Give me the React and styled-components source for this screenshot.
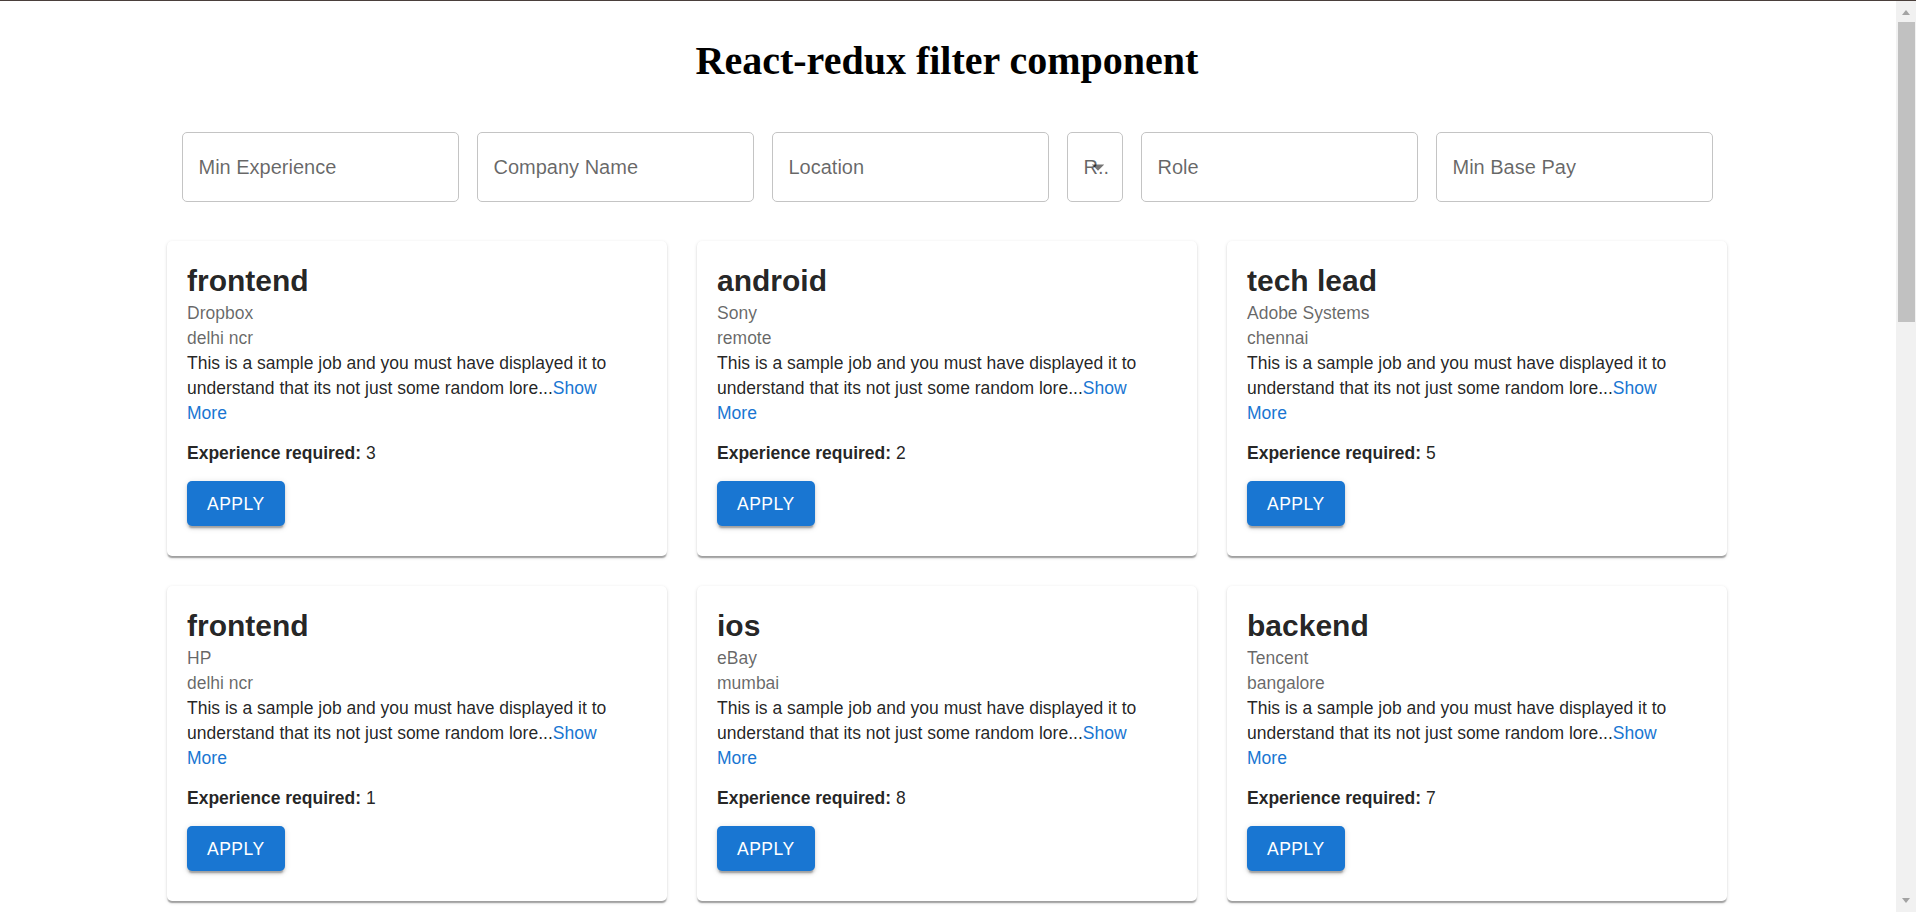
import React, { useState } from 'react';
import styled, { createGlobalStyle } from 'styled-components';

const textColor = 'rgba(0, 0, 0, 0.87)';
const mutedColor = 'rgba(0, 0, 0, 0.6)';
const primary = '#1976d2';

const GlobalStyle = createGlobalStyle`
  html, body {
    margin: 0;
    padding: 0;
    background: #fff;
  }
  body {
    font-family: "Liberation Sans", Arial, Helvetica, sans-serif;
    color: ${textColor};
  }
`;

const Wrapper = styled.div`
  border-top: 1px solid #4a3f3b;
  padding: 37px 22px 30px 0;
`;

// window scrollbar as it shows in the screenshot
const ScrollRail = styled.div`
  position: fixed;
  top: 1px;
  right: 0;
  bottom: 0;
  width: 20px;
  background: #f1f1f1;
`;

const ScrollArrow = styled.div`
  position: absolute;
  left: 6px;
  ${({ down }) => (down ? 'bottom: 9px;' : 'top: 9px;')}
  width: 0;
  height: 0;
  border-left: 4.5px solid transparent;
  border-right: 4.5px solid transparent;
  ${({ down }) => (down ? 'border-top' : 'border-bottom')}: 5px solid #a3a3a3;
`;

const ScrollThumb = styled.div`
  position: absolute;
  top: 21px;
  left: 2px;
  right: 1px;
  height: 300px;
  background: #c1c1c1;
`;

const Title = styled.h1`
  margin: 0 0 48px;
  text-align: center;
  font-family: "Liberation Serif", "Times New Roman", serif;
  font-weight: bold;
  font-size: 40px;
  line-height: 46px;
  color: #000;
`;

const Filters = styled.div`
  display: flex;
  justify-content: center;
  gap: 18px;
  margin-bottom: 39px;
`;

const FilterInput = styled.input`
  box-sizing: border-box;
  width: 277px;
  height: 70px;
  padding: 0 16px;
  border: 1px solid #c4c4c4;
  border-radius: 5px;
  font-family: "Liberation Sans", Arial, sans-serif;
  font-size: 20px;
  color: ${textColor};
  background: #fff;
  outline: none;
  &::placeholder {
    color: ${mutedColor};
    opacity: 1;
  }
`;

const SelectBox = styled.div`
  position: relative;
  box-sizing: border-box;
  width: 56px;
  height: 70px;
  padding: 0 16px;
  display: flex;
  align-items: center;
  border: 1px solid #c4c4c4;
  border-radius: 5px;
  font-size: 20px;
  color: ${mutedColor};
  white-space: nowrap;
  overflow: hidden;
`;

const DropIcon = styled.svg`
  position: absolute;
  right: 9px;
  top: calc(50% - 15px);
  width: 30px;
  height: 30px;
  fill: rgba(0, 0, 0, 0.54);
`;

const Grid = styled.div`
  display: grid;
  grid-template-columns: repeat(3, 500px);
  justify-content: center;
  gap: 30px;
`;

const Card = styled.div`
  box-sizing: border-box;
  background: #fff;
  border-radius: 5px;
  padding: 20px 40px 30px 20px;
  box-shadow: 0px 2.5px 1.25px -1.25px rgba(0, 0, 0, 0.2),
    0px 1.25px 1.25px 0px rgba(0, 0, 0, 0.14),
    0px 1.25px 3.75px 0px rgba(0, 0, 0, 0.12);
`;

const Role = styled.h2`
  margin: 0;
  font-size: 30px;
  line-height: 40px;
  font-weight: bold;
  color: ${textColor};
`;

const Line = styled.div`
  font-size: 17.5px;
  line-height: 25px;
  color: ${({ muted }) => (muted ? mutedColor : textColor)};
`;

const ShowMore = styled.a`
  color: ${primary};
  text-decoration: none;
  cursor: pointer;
`;

const Experience = styled(Line)`
  margin-top: 15px;
  b {
    font-weight: bold;
  }
`;

const ApplyButton = styled.button`
  display: block;
  margin-top: 15px;
  padding: 7.5px 20px;
  border: 0;
  border-radius: 5px;
  background: ${primary};
  color: #fff;
  font-family: "Liberation Sans", Arial, sans-serif;
  font-size: 17.5px;
  font-weight: 500;
  line-height: 30px;
  letter-spacing: 0.02857em;
  text-transform: uppercase;
  cursor: pointer;
  box-shadow: 0px 3.75px 1.25px -2.5px rgba(0, 0, 0, 0.2),
    0px 2.5px 2.5px 0px rgba(0, 0, 0, 0.14),
    0px 1.25px 6.25px 0px rgba(0, 0, 0, 0.12);
`;

const jobs = [
  ['frontend', 'Dropbox', 'delhi ncr', 3],
  ['android', 'Sony', 'remote', 2],
  ['tech lead', 'Adobe Systems', 'chennai', 5],
  ['frontend', 'HP', 'delhi ncr', 1],
  ['ios', 'eBay', 'mumbai', 8],
  ['backend', 'Tencent', 'bangalore', 7],
  ['ios', 'Adobe Systems', 'remote', 4],
  ['backend', 'Dropbox', 'mumbai', 6],
  ['tech lead', 'Sony', 'bangalore', 9],
  ['android', 'HP', 'chennai', 2],
  ['frontend', 'eBay', 'remote', 5],
  ['backend', 'Sony', 'delhi ncr', 3],
  ['tech lead', 'Tencent', 'mumbai', 10],
  ['ios', 'Dropbox', 'bangalore', 1],
  ['android', 'Adobe Systems', 'delhi ncr', 6],
  ['frontend', 'Tencent', 'chennai', 4],
  ['backend', 'HP', 'remote', 8],
  ['ios', 'Sony', 'chennai', 7],
  ['tech lead', 'eBay', 'delhi ncr', 2],
  ['android', 'Dropbox', 'bangalore', 9],
  ['frontend', 'Adobe Systems', 'mumbai', 3],
].map(([role, company, location, minExp], i) => ({ id: i, role, company, location, minExp }));

const description =
  'This is a sample job and you must have displayed it to understand that its not just some random lore...';

const JobCard = ({ job }) => (
  <Card>
    <Role>{job.role}</Role>
    <Line muted>{job.company}</Line>
    <Line muted>{job.location}</Line>
    <Line>
      {description}
      <ShowMore>Show More</ShowMore>
    </Line>
    <Experience>
      <b>Experience required:</b> {job.minExp}
    </Experience>
    <ApplyButton>Apply</ApplyButton>
  </Card>
);

export default function App() {
  const [filters, setFilters] = useState({ exp: '', company: '', location: '', role: '', pay: '' });
  const onChange = (key) => (e) => setFilters({ ...filters, [key]: e.target.value });

  return (
    <Wrapper>
      <GlobalStyle />
      <Title>React-redux filter component</Title>
      <Filters>
        <FilterInput placeholder="Min Experience" value={filters.exp} onChange={onChange('exp')} />
        <FilterInput placeholder="Company Name" value={filters.company} onChange={onChange('company')} />
        <FilterInput placeholder="Location" value={filters.location} onChange={onChange('location')} />
        <SelectBox>
          R..
          <DropIcon viewBox="0 0 24 24">
            <path d="M7 10l5 5 5-5z" />
          </DropIcon>
        </SelectBox>
        <FilterInput placeholder="Role" value={filters.role} onChange={onChange('role')} />
        <FilterInput placeholder="Min Base Pay" value={filters.pay} onChange={onChange('pay')} />
      </Filters>
      <Grid>
        {jobs.map((job) => (
          <JobCard key={job.id} job={job} />
        ))}
      </Grid>
      <ScrollRail>
        <ScrollArrow />
        <ScrollThumb />
        <ScrollArrow down />
      </ScrollRail>
    </Wrapper>
  );
}
